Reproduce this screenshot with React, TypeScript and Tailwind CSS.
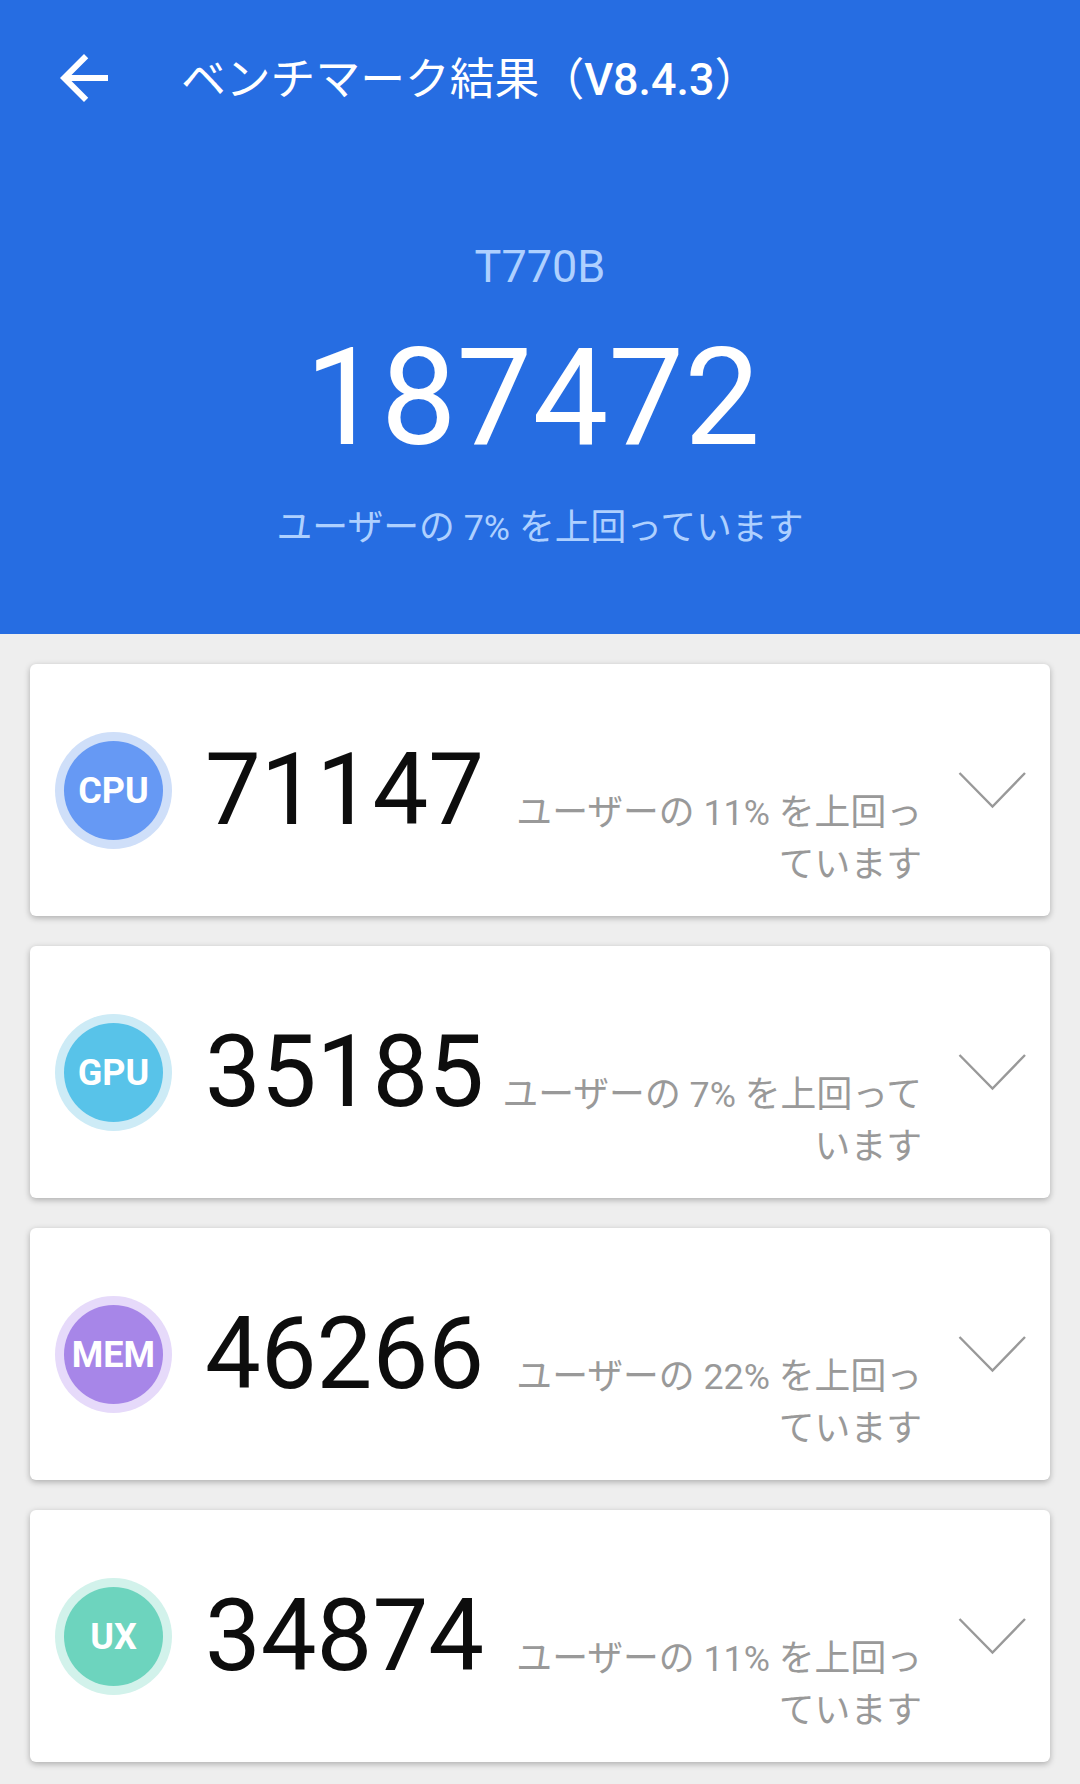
const items = [
  { label: 'CPU', score: '71147', lines: ['ユーザーの 11% を上回っ', 'ています'], fill: 'bg-[#6699f4]', ring: 'bg-[#cfdff9]' },
  { label: 'GPU', score: '35185', lines: ['ユーザーの 7% を上回って', 'います'], fill: 'bg-[#58c3e9]', ring: 'bg-[#cdebf6]' },
  { label: 'MEM', score: '46266', lines: ['ユーザーの 22% を上回っ', 'ています'], fill: 'bg-[#a786e8]', ring: 'bg-[#e6dafa]' },
  { label: 'UX', score: '34874', lines: ['ユーザーの 11% を上回っ', 'ています'], fill: 'bg-[#6dd4be]', ring: 'bg-[#d2f2eb]' },
]

export default function App() {
  return (
    <div className="h-[1784px] w-[1080px] overflow-hidden bg-[#eeeeee] font-[Roboto,'Noto_Sans_CJK_JP',sans-serif]">
      <header className="h-[634px] bg-[#266de2] text-white">
        <div className="flex h-[156px] items-center pl-12">
          <svg className="size-[72px] shrink-0" viewBox="0 0 24 24" fill="currentColor">
            <path d="M20 11H7.83l5.59-5.59L12 4l-8 8 8 8 1.41-1.41L7.83 13H20v-2z" />
          </svg>
          <h1 className="ml-[61px] pt-1 text-[44.8px] leading-[60px] whitespace-nowrap">
            ベンチマーク結果（<span className="font-medium">V8.4.3</span>）
          </h1>
        </div>
        <div className="flex flex-col items-center">
          <p className="mt-[81px] text-[45px] leading-[60px] text-[#aed0ff]">T770B</p>
          <p className="mt-[31px] pr-[15px] text-[135px] leading-[140px]">187472</p>
          <p className="mt-9 text-[35.8px] leading-[48px] text-[#aed0ff]">ユーザーの 7% を上回っています</p>
        </div>
      </header>
      <main className="flex flex-col gap-[30px] px-[30px] pt-[30px]">
        {items.map((item) => (
          <section key={item.label} className="flex h-[252px] items-center rounded-md bg-white pl-[25px] shadow-[0_2px_6px_rgba(0,0,0,0.28)]">
            <div className={`flex size-[117px] shrink-0 items-center justify-center rounded-full ${item.ring}`}>
              <div className={`flex size-[99px] items-center justify-center rounded-full pt-px text-[36px] font-bold text-white ${item.fill}`}>{item.label}</div>
            </div>
            <div className="ml-[33px] w-[281px] text-[99.3px] leading-[110px] text-[#0d0d0d]">{item.score}</div>
            <div className="mt-[97px] w-[436px] text-right text-[35.8px] leading-[52px] whitespace-nowrap text-[#999999]">
              {item.lines.map((line) => <p key={line}>{line}</p>)}
            </div>
            <svg className="ml-[36px] h-[38px] w-[68px] shrink-0" viewBox="0 0 68 38" fill="none" stroke="#999999" strokeWidth="2.4">
              <path d="M1.5 2L34.5 35.5L67 2" />
            </svg>
          </section>
        ))}
      </main>
    </div>
  )
}
